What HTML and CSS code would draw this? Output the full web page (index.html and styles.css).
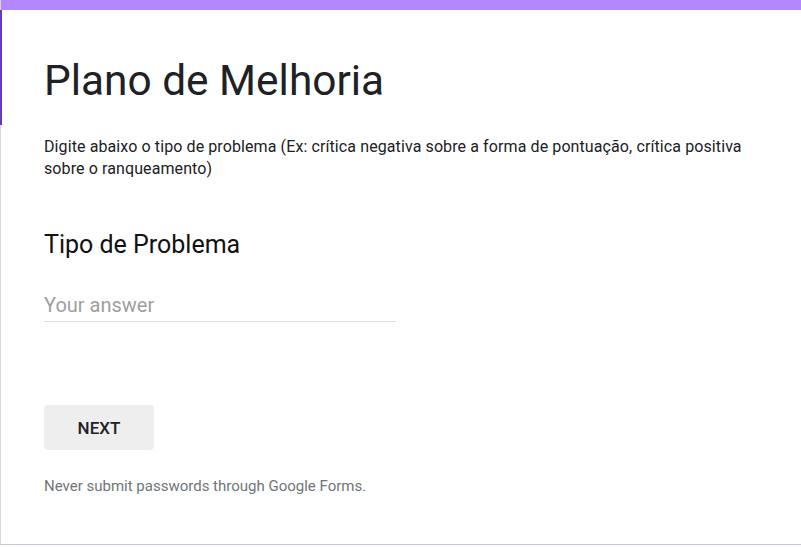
FILE: index.html
```html
<!DOCTYPE html>
<html>
<head>
<meta charset="utf-8">
<link rel="stylesheet" href="styles.css">
</head>
<body>
<div class="card">
  <div class="topbar"></div>
  <div class="accent"></div>
  <div class="content">
    <h1 class="title">Plano de Melhoria</h1>
    <p class="desc">Digite abaixo o tipo de problema (Ex: crítica negativa sobre a forma de pontuação, crítica positiva sobre o ranqueamento)</p>
    <h2 class="question">Tipo de Problema</h2>
    <div class="answer">Your answer</div>
    <div class="actions"><button class="next">NEXT</button></div>
    <p class="note">Never submit passwords through Google Forms.</p>
  </div>
</div>
</body>
</html>
```
FILE: styles.css
```css
html, body {
  margin: 0;
  padding: 0;
  background: #ffffff;
}
body {
  font-family: Roboto, "Liberation Sans", Arial, sans-serif;
  color: #202124;
}
.card {
  position: relative;
  width: 801px;
  height: 545px;
  box-sizing: border-box;
  border-left: 1px solid #d9d4e4;
  border-bottom: 1px solid #c9c2d9;
  background: #fff;
}
.topbar {
  height: 10px;
  background: #b388ff;
}
.accent {
  position: absolute;
  left: -1px;
  top: 10px;
  width: 2px;
  height: 115px;
  background: #673ab7;
}
.content {
  padding: 0 44px 0 43px;
}
.title {
  margin: 0;
  padding-top: 45px;
  font-size: 42.4px;
  font-weight: 400;
  line-height: 52px;
  color: #202124;
}
.desc {
  margin: 29px 0 0 0;
  font-size: 16px;
  letter-spacing: 0.1px;
  line-height: 22px;
  color: #202124;
}
.question {
  margin: 51px 0 0 0;
  font-size: 25px;
  font-weight: 400;
  line-height: 28px;
  color: #111;
}
.answer {
  margin-top: 34px;
  width: 352px;
  height: 29px;
  font-size: 20px;
  line-height: 24px;
  color: #9e9e9e;
  border-bottom: 1px solid #e0e0e0;
  box-sizing: border-box;
}
.actions {
  margin-top: 83px;
}
.next {
  display: block;
  width: 110px;
  height: 45px;
  border: none;
  border-radius: 4px;
  background: #eeeeee;
  font-family: Roboto, "Liberation Sans", Arial, sans-serif;
  font-size: 17px;
  font-weight: 500;
  color: #202124;
  padding: 0;
}
.note {
  margin: 26px 0 0 0;
  font-size: 15px;
  line-height: 20px;
  color: #70757a;
}
```
